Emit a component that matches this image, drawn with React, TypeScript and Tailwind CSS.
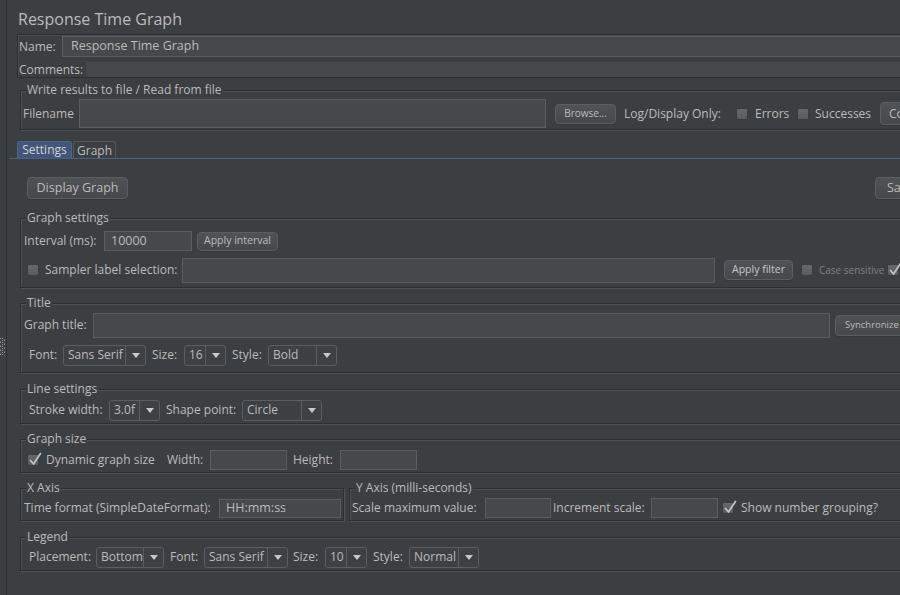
import React from "react";

const Label = ({ w, className = "", children }: { w?: string; className?: string; children: React.ReactNode }) => (
  <span className={`shrink-0 whitespace-nowrap leading-[16px] ${w ?? ""} ${className}`}>{children}</span>
);

const Input = ({ className = "", value = "" }: { className?: string; value?: string }) => (
  <div className={`shrink-0 bg-[#45494a] border border-[#5b5e60] flex items-center pl-[6px] text-[#bbbbbb] ${className}`}>
    {value}
  </div>
);

const Btn = ({ className = "", children }: { className?: string; children: React.ReactNode }) => (
  <div
    className={`shrink-0 flex items-center justify-center rounded-[4px] border border-[#5a5e60] bg-linear-to-b from-[#4f5355] to-[#46494b] text-[#bbbbbb] whitespace-nowrap shadow-[0_1px_0_#35383a] ${className}`}
  >
    {children}
  </div>
);

const Check = ({ checked = false, className = "" }: { checked?: boolean; className?: string }) => (
  <div className={`relative shrink-0 w-[12px] h-[12px] rounded-[2px] border border-[#3a3c3e] bg-linear-to-b from-[#65696c] to-[#595c5f] ${className}`}>
    {checked && (
      <svg className="absolute left-[1px] -top-[3px]" width="13" height="14" viewBox="0 0 13 14">
        <path d="M1.5 8.5 L4.5 12 L11.5 1.5" fill="none" stroke="#c4c4c4" strokeWidth="1.7" strokeLinecap="round" strokeLinejoin="round" />
      </svg>
    )}
  </div>
);

const Combo = ({ w, value }: { w: string; value: string }) => (
  <div className={`shrink-0 ${w} h-[21px] flex rounded-[3px] border border-[#5a5e60] bg-[#3e4143]`}>
    <div className="flex-1 min-w-0 flex items-center pl-[4px] whitespace-nowrap overflow-hidden">{value}</div>
    <div className="w-[20px] shrink-0 border-l border-[#5a5e60] flex items-center justify-center">
      <svg width="8" height="5" viewBox="0 0 8 5">
        <polygon points="0,0 8,0 4,5" fill="#c8c8c8" />
      </svg>
    </div>
  </div>
);

const Group = ({ title, className = "", children }: { title: string; className?: string; children: React.ReactNode }) => (
  <fieldset className={`shrink-0 border border-[#2c2e30] shadow-[inset_1px_1px_0_#4e5254,1px_1px_0_#4e5254] ${className}`}>
    <legend className="ml-[5px] px-[1px] leading-[16px] bg-[#3c3f41] text-[#bbbbbb]">{title}</legend>
    {children}
  </fieldset>
);

export default function App() {
  return (
    <div className="w-[900px] h-[595px] overflow-hidden bg-[#3c3f41] flex font-['Open_Sans',sans-serif] text-[12px] text-[#bbbbbb]">
      {/* left splitter strip */}
      <div className="w-[7px] shrink-0 border-r border-[#2e3032] flex flex-col pt-[338px]">
        <svg width="5" height="18" viewBox="0 0 5 18">
          {Array.from({ length: 9 }).map((_, i) => (
            <g key={i}>
              <rect x={i % 2 === 0 ? 0 : 2} y={i * 2} width="1" height="1" fill="#9a9a9a" />
              <rect x={i % 2 === 0 ? 2 : 4} y={i * 2} width="1" height="1" fill="#9a9a9a" />
              <rect x={i % 2 === 0 ? 4 : 0} y={i * 2 + 1} width="1" height="1" fill="#6a6a6a" />
            </g>
          ))}
        </svg>
      </div>

      <div className="w-[960px] shrink-0 pl-[10px] flex flex-col">
        {/* Title */}
        <div className="pt-[9px] h-[29px] pl-[1px] text-[16px] leading-[20px] text-[#bbbbbb]">Response Time Graph</div>

        {/* Name / Comments panel */}
        <div className="mt-[5px] w-[940px] h-[44px] border border-[#2c2e30] shadow-[inset_1px_1px_0_#4a4e50] flex flex-col">
          <div className="mt-[1px] h-[21px] flex items-center pl-[1px]">
            <Label w="w-[43px]">Name:</Label>
            <Input className="w-[880px] h-[21px] pl-[8px] text-[12.5px]" value="Response Time Graph" />
          </div>
          <div className="mt-[5px] h-[15px] flex items-center pl-[1px]">
            <Label w="w-[67px]">Comments:</Label>
            <div className="w-[860px] h-[15px] bg-[#45494a]" />
          </div>
        </div>

        {/* Write results group */}
        <Group title="Write results to file / Read from file" className="mt-[4px] ml-[3px] w-[937px] pb-[1px]">
          <div className="mt-[1px] h-[29px] flex items-center pl-[2px]">
            <Label w="w-[56px]">Filename</Label>
            <Input className="w-[467px] h-[29px]" />
            <Btn className="ml-[9px] w-[61px] h-[20px] text-[10px]">Browse...</Btn>
            <Label w="w-[112px]" className="ml-[8px]">Log/Display Only:</Label>
            <Check />
            <Label w="w-[42px]" className="ml-[7px]">Errors</Label>
            <Check />
            <Label w="w-[65px]" className="ml-[6px]">Successes</Label>
            <Btn className="w-[80px] h-[23px] justify-start pl-[8px]">Configure</Btn>
          </div>
        </Group>

        {/* Tabs */}
        <div className="mt-[11px] -ml-[8px] pl-[8px] flex h-[18px] border-b border-[#4a6088]">
          <div className="w-[55px] h-[17px] rounded-t-[3px] bg-[#42557a] border border-b-0 border-[#4e6486] flex items-center justify-center text-[#d2d2d2] leading-[16px]">
            Settings
          </div>
          <div className="ml-[1px] w-[43px] h-[17px] rounded-t-[3px] bg-[#3c3f41] border border-b-0 border-[#54585a] flex items-center justify-center leading-[16px] pt-[1px]">
            Graph
          </div>
        </div>

        {/* Tab content */}
        <div className="flex flex-col">
          <div className="mt-[18px] h-[22px] flex pl-[10px]">
            <Btn className="w-[101px] h-[22px] text-[12.5px]">Display Graph</Btn>
            <Btn className="ml-[747px] w-[90px] h-[22px] justify-start pl-[11px] text-[12.5px]">Save Graph</Btn>
          </div>

          <Group title="Graph settings" className="mt-[11px] ml-[3px] w-[937px] pb-[4px]">
            <div className="mt-[3px] h-[24px] flex items-center pl-[3px]">
              <Label w="w-[80px]">Interval (ms):</Label>
              <Input className="w-[88px] h-[20px] text-[12.5px]" value="10000" />
              <Btn className="ml-[5px] w-[81px] h-[19px] text-[10.5px]">Apply interval</Btn>
            </div>
            <div className="mt-[4px] h-[26px] flex items-center pl-[6px]">
              <Check />
              <Label w="w-[137px]" className="ml-[6px]">Sampler label selection:</Label>
              <Input className="w-[533px] h-[25px]" />
              <Btn className="ml-[9px] w-[69px] h-[20px] text-[10.5px] text-[#c8c8c8]">Apply filter</Btn>
              <Check className="ml-[8px]" />
              <Label w="w-[68px]" className="ml-[6px] text-[10px] text-[#7d8083]">Case sensitive</Label>
              <Check checked />
            </div>
          </Group>

          <Group title="Title" className="mt-[7px] ml-[3px] w-[937px] pb-[6px]">
            <div className="mt-[1px] h-[26px] flex items-center pl-[3px]">
              <Label w="w-[69px]">Graph title:</Label>
              <Input className="w-[737px] h-[25px]" />
              <Btn className="ml-[5px] w-[75px] h-[21px] text-[9.5px] justify-start pl-[9px]">Synchronize</Btn>
            </div>
            <div className="mt-[6px] h-[22px] flex items-center pl-[8px]">
              <Label w="w-[34px]">Font:</Label>
              <Combo w="w-[83px]" value="Sans Serif" />
              <Label w="w-[32px]" className="ml-[6px]">Size:</Label>
              <Combo w="w-[42px]" value="16" />
              <Label w="w-[36px]" className="ml-[6px]">Style:</Label>
              <Combo w="w-[69px]" value="Bold" />
            </div>
          </Group>

          <Group title="Line settings" className="mt-[8px] ml-[3px] w-[937px] pb-[2px]">
            <div className="mt-[2px] h-[22px] flex items-center pl-[8px]">
              <Label w="w-[80px]">Stroke width:</Label>
              <Combo w="w-[51px]" value="3.0f" />
              <Label w="w-[76px]" className="ml-[6px]">Shape point:</Label>
              <Combo w="w-[80px]" value="Circle" />
            </div>
          </Group>

          <Group title="Graph size" className="mt-[7px] ml-[3px] w-[937px] pb-[1px]">
            <div className="mt-[2px] h-[22px] flex items-center pl-[6px]">
              <Check checked />
              <Label w="w-[121px]" className="ml-[7px]">Dynamic graph size</Label>
              <Label w="w-[43px]">Width:</Label>
              <Input className="w-[77px] h-[20px]" />
              <Label w="w-[47px]" className="ml-[6px]">Height:</Label>
              <Input className="w-[77px] h-[20px]" />
            </div>
          </Group>

          <div className="mt-[7px] ml-[3px] flex">
            <Group title="X Axis" className="w-[324px] pb-[1px]">
              <div className="mt-[1px] h-[22px] flex items-center pl-[3px]">
                <Label w="w-[195px]">Time format (SimpleDateFormat):</Label>
                <Input className="w-[122px] h-[19px] text-[12.5px]" value="HH:mm:ss" />
              </div>
            </Group>
            <Group title="Y Axis (milli-seconds)" className="ml-[5px] w-[608px] pb-[1px]">
              <div className="mt-[1px] h-[22px] flex items-center pl-[2px]">
                <Label w="w-[133px]">Scale maximum value:</Label>
                <Input className="w-[66px] h-[20px]" />
                <Label w="w-[98px]" className="ml-[2px]">Increment scale:</Label>
                <Input className="w-[67px] h-[20px]" />
                <Check checked className="ml-[4px]" />
                <Label className="ml-[7px]">Show number grouping?</Label>
              </div>
            </Group>
          </div>

          <Group title="Legend" className="mt-[8px] ml-[3px] w-[937px] pb-[2px]">
            <div className="mt-[1px] h-[22px] flex items-center pl-[8px]">
              <Label w="w-[67px]">Placement:</Label>
              <Combo w="w-[68px]" value="Bottom" />
              <Label w="w-[34px]" className="ml-[6px]">Font:</Label>
              <Combo w="w-[84px]" value="Sans Serif" />
              <Label w="w-[32px]" className="ml-[5px]">Size:</Label>
              <Combo w="w-[42px]" value="10" />
              <Label w="w-[36px]" className="ml-[6px]">Style:</Label>
              <Combo w="w-[70px]" value="Normal" />
            </div>
          </Group>
        </div>
      </div>
    </div>
  );
}
